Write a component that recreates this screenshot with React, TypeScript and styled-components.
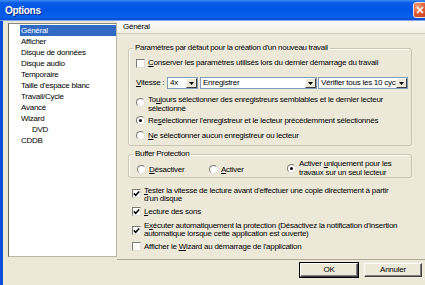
import React from 'react';
import styled, { createGlobalStyle } from 'styled-components';

const uiFont = `"Liberation Sans", Arial, sans-serif`;

const GlobalStyle = createGlobalStyle`
  * { box-sizing: border-box; }
  html, body { margin: 0; padding: 0; background: #ECE9D8; }
  body { font-family: ${uiFont}; font-size: 8px; letter-spacing: -0.25px; color: #000; }
`;

const Window = styled.div`
  width: 425px;
  height: 285px;
  overflow: hidden;
  display: flex;
  flex-direction: column;
  background: #ECE9D8;
`;

const TitleBar = styled.div`
  flex: none;
  height: 21px;
  display: flex;
  align-items: center;
  justify-content: space-between;
  padding-left: 5px;
  background: linear-gradient(#3D8DF5 0%, #0A5DE8 14%, #0055E5 50%, #0862EC 86%, #0A48C8 100%);
  border-bottom: 1px solid #7FA6EC;
`;

const Title = styled.span`
  color: #fff;
  font-weight: bold;
  font-size: 10px;
  letter-spacing: -0.3px;
  text-shadow: 1px 1px 0 #0B2A8A;
`;

const CloseButton = styled.div`
  flex: none;
  width: 14px;
  height: 16px;
  margin-right: -2px;
  border: 1px solid #F4E4DC;
  border-radius: 3px;
  background: radial-gradient(circle at 30% 25%, #F3A184, #DB5A30 55%, #BC3A17);
  display: flex;
  align-items: center;
  justify-content: center;
`;

const Frame = styled.div`
  flex: 1;
  display: flex;
  flex-direction: column;
  border-left: 3px solid #0B4FD8;
  padding-left: 5px;
`;

const Main = styled.div`
  display: flex;
  height: 239px;
`;

const Tree = styled.ul`
  flex: none;
  width: 109px;
  height: 234px;
  margin: 2px 0 0;
  padding: 1px 0 0;
  list-style: none;
  background: #fff;
  border: 1px solid #B9B6A6;
  border-left: 1px solid #6E6D66;
  border-top-color: #8C8A80;
`;

const TreeItem = styled.li<{ $indent: number; $selected?: boolean }>`
  height: 11px;
  line-height: 11px;
  margin-left: ${p => 11 + p.$indent}px;
  padding-left: 1px;
  white-space: nowrap;
  background: ${p => (p.$selected ? '#316AC5' : 'transparent')};
  color: ${p => (p.$selected ? '#fff' : '#000')};
`;

const Page = styled.div`
  flex: 1;
  display: flex;
  flex-direction: column;
  border-bottom: 1px solid #ACA899;
`;

const PageHeader = styled.div`
  height: 13px;
  line-height: 12px;
  padding-left: 6px;
  background: linear-gradient(#FBFAF5, #F1EFE5);
  border-bottom: 1px solid #D2CEBC;
`;

const PageBody = styled.div`
  display: flex;
  flex-direction: column;
  padding: 9px 13px 0 11px;
`;

const Group = styled.fieldset<{ $mt: number }>`
  margin: ${p => p.$mt}px 0 0;
  padding: 0;
  min-width: 0;
  border: 1px solid #C9C6B3;
  border-radius: 3px;
  box-shadow: inset 1px 1px 0 #FBFAF4;
`;

const Legend = styled.legend`
  margin-left: 4px;
  padding: 0 2px;
  line-height: 10px;
  height: 10px;
  letter-spacing: -0.3px;
`;

const GroupInner = styled.div<{ $pt: number; $pb: number; $pl: number }>`
  display: flex;
  flex-direction: column;
  padding: ${p => p.$pt}px 0 ${p => p.$pb}px ${p => p.$pl}px;
`;

const OptionRow = styled.div<{ $mt?: number; $lh?: number; $top?: boolean; $ml?: number }>`
  display: flex;
  align-items: ${p => (p.$top ? 'flex-start' : 'center')};
  gap: 3px;
  margin-top: ${p => p.$mt ?? 0}px;
  margin-left: ${p => p.$ml ?? 0}px;
  line-height: ${p => p.$lh ?? 10}px;
  white-space: nowrap;
`;

const Box = styled.span<{ $mt?: number }>`
  flex: none;
  width: 9px;
  height: 9px;
  margin-top: ${p => p.$mt ?? 0}px;
  background: #fff;
  border: 1px solid;
  border-color: #7A7A72 #E2E0D4 #E2E0D4 #7A7A72;
  display: flex;
  align-items: center;
  justify-content: center;
`;

const Radio = styled.span<{ $mt?: number }>`
  flex: none;
  width: 9px;
  height: 9px;
  margin-top: ${p => p.$mt ?? 0}px;
  border-radius: 50%;
  background: #fff;
  border: 1px solid;
  border-color: #7A7A72 #E2E0D4 #E2E0D4 #7A7A72;
  display: flex;
  align-items: center;
  justify-content: center;
`;

const Dot = styled.span`
  width: 3px;
  height: 3px;
  border-radius: 50%;
  background: #000;
`;

const U = styled.span`
  text-decoration: underline;
`;

const SpeedRow = styled.div`
  display: flex;
  align-items: center;
  margin-top: 9px;
  line-height: 10px;
  white-space: nowrap;
`;

const SpeedLabel = styled.span`
  flex: none;
  width: 31px;
`;

const Combo = styled.div<{ $w: number; $ml: number }>`
  flex: none;
  width: ${p => p.$w}px;
  height: 12px;
  margin-left: ${p => p.$ml}px;
  display: flex;
  background: #fff;
  border: 1px solid #7F9DB9;
`;

const ComboText = styled.span`
  flex: 1;
  min-width: 0;
  overflow: hidden;
  white-space: nowrap;
  padding-left: 2px;
  line-height: 10px;
`;

const ComboButton = styled.span`
  flex: none;
  width: 11px;
  height: 10px;
  background: #ECE9D8;
  border: 1px solid;
  border-color: #fff #404040 #404040 #fff;
  display: flex;
  align-items: center;
  justify-content: center;
`;

const BufferRow = styled.div`
  display: flex;
  align-items: flex-start;
  line-height: 9px;
`;

const BufferOption = styled.div<{ $w?: number; $mt: number }>`
  flex: ${p => (p.$w ? 'none' : '1')};
  width: ${p => (p.$w ? `${p.$w}px` : 'auto')};
  margin-top: ${p => p.$mt}px;
  display: flex;
  align-items: center;
  gap: 3px;
  white-space: nowrap;
`;

const ButtonRow = styled.div`
  display: flex;
  justify-content: flex-end;
  gap: 6px;
  padding: 3px 3px 0 0;
`;

const Button = styled.div<{ $default?: boolean }>`
  width: 58px;
  height: 14px;
  line-height: 12px;
  text-align: center;
  background: #ECE9D8;
  border: 1px solid;
  border-color: #FFFFFF #404040 #404040 #FFFFFF;
  box-shadow: ${p => (p.$default ? '0 0 0 1px #000, inset -1px -1px 0 #808080' : 'inset -1px -1px 0 #808080')};
`;

const Check = () => (
  <svg width="7" height="7" viewBox="0 0 7 7">
    <path d="M0.8 3.4 L2.7 5.3 L6.2 1.4" fill="none" stroke="#000" strokeWidth="1.5" />
  </svg>
);

const Arrow = () => (
  <svg width="5" height="3" viewBox="0 0 5 3">
    <path d="M0 0 H5 L2.5 3 Z" fill="#000" />
  </svg>
);

const CloseX = () => (
  <svg width="8" height="8" viewBox="0 0 8 8">
    <path d="M1 1 L7 7 M7 1 L1 7" stroke="#fff" strokeWidth="1.6" />
  </svg>
);

const treeItems = [
  { label: 'Général', indent: 0, selected: true },
  { label: 'Afficher', indent: 0 },
  { label: 'Disque de données', indent: 0 },
  { label: 'Disque audio', indent: 0 },
  { label: 'Temporaire', indent: 0 },
  { label: "Taille d'espace blanc", indent: 0 },
  { label: 'Travail/Cycle', indent: 0 },
  { label: 'Avancé', indent: 0 },
  { label: 'Wizard', indent: 0 },
  { label: 'DVD', indent: 11 },
  { label: 'CDDB', indent: 0 },
];

export default function App() {
  return (
    <>
      <GlobalStyle />
      <Window>
        <TitleBar>
          <Title>Options</Title>
          <CloseButton>
            <CloseX />
          </CloseButton>
        </TitleBar>
        <Frame>
          <Main>
            <Tree>
              {treeItems.map(item => (
                <TreeItem key={item.label} $indent={item.indent} $selected={item.selected}>
                  {item.label}
                </TreeItem>
              ))}
            </Tree>
            <Page>
              <PageHeader>Général</PageHeader>
              <PageBody>
                <Group $mt={0}>
                  <Legend>Paramètres par défaut pour la création d'un nouveau travail</Legend>
                  <GroupInner $pt={5} $pb={5} $pl={7}>
                    <OptionRow>
                      <Box />
                      <span>
                        <U>C</U>onserver les paramètres utilisés lors du dernier démarrage du travail
                      </span>
                    </OptionRow>
                    <SpeedRow>
                      <SpeedLabel>
                        <U>V</U>itesse :
                      </SpeedLabel>
                      <Combo $w={31} $ml={0}>
                        <ComboText>4x</ComboText>
                        <ComboButton>
                          <Arrow />
                        </ComboButton>
                      </Combo>
                      <Combo $w={117} $ml={2}>
                        <ComboText>Enregistrer</ComboText>
                        <ComboButton>
                          <Arrow />
                        </ComboButton>
                      </Combo>
                      <Combo $w={90} $ml={1}>
                        <ComboText>Vérifier tous les 10 cycles</ComboText>
                        <ComboButton>
                          <Arrow />
                        </ComboButton>
                      </Combo>
                    </SpeedRow>
                    <OptionRow $mt={6} $lh={9} $top>
                      <Radio $mt={3} />
                      <span>
                        To<U>u</U>jours sélectionner des enregistreurs semblables et le dernier lecteur
                        <br />
                        sélectionné
                      </span>
                    </OptionRow>
                    <OptionRow $mt={3} $lh={9}>
                      <Radio>
                        <Dot />
                      </Radio>
                      <span>
                        Re<U>s</U>électionner l'enregistreur et le lecteur précédemment sélectionnés
                      </span>
                    </OptionRow>
                    <OptionRow $mt={6} $lh={9}>
                      <Radio />
                      <span>
                        <U>N</U>e sélectionner aucun enregistreur ou lecteur
                      </span>
                    </OptionRow>
                  </GroupInner>
                </Group>
                <Group $mt={3}>
                  <Legend>Buffer Protection</Legend>
                  <GroupInner $pt={0} $pb={0} $pl={8}>
                    <BufferRow>
                      <BufferOption $w={72} $mt={6}>
                        <Radio />
                        <span>
                          <U>D</U>ésactiver
                        </span>
                      </BufferOption>
                      <BufferOption $w={78} $mt={6}>
                        <Radio />
                        <span>
                          <U>A</U>ctiver
                        </span>
                      </BufferOption>
                      <BufferOption $mt={0}>
                        <Radio>
                          <Dot />
                        </Radio>
                        <span>
                          Activer <U>u</U>niquement pour les
                          <br />
                          travaux sur un seul lecteur
                        </span>
                      </BufferOption>
                    </BufferRow>
                  </GroupInner>
                </Group>
                <OptionRow $mt={9} $lh={8} $ml={4} $top>
                  <Box $mt={2}>
                    <Check />
                  </Box>
                  <span>
                    <U>T</U>ester la vitesse de lecture avant d'effectuer une copie directement à partir
                    <br />
                    d'un disque
                  </span>
                </OptionRow>
                <OptionRow $mt={4} $lh={8} $ml={4}>
                  <Box>
                    <Check />
                  </Box>
                  <span>
                    <U>L</U>ecture des sons
                  </span>
                </OptionRow>
                <OptionRow $mt={6} $lh={8} $ml={4}>
                  <Box>
                    <Check />
                  </Box>
                  <span>
                    E<U>x</U>écuter automatiquement la protection (Désactivez la notification d'insertion
                    <br />
                    automatique lorsque cette application est ouverte)
                  </span>
                </OptionRow>
                <OptionRow $mt={4} $lh={8} $ml={4}>
                  <Box />
                  <span>
                    Afficher le <U>W</U>izard au démarrage de l'application
                  </span>
                </OptionRow>
              </PageBody>
            </Page>
          </Main>
          <ButtonRow>
            <Button $default>OK</Button>
            <Button>Annuler</Button>
          </ButtonRow>
        </Frame>
      </Window>
    </>
  );
}
